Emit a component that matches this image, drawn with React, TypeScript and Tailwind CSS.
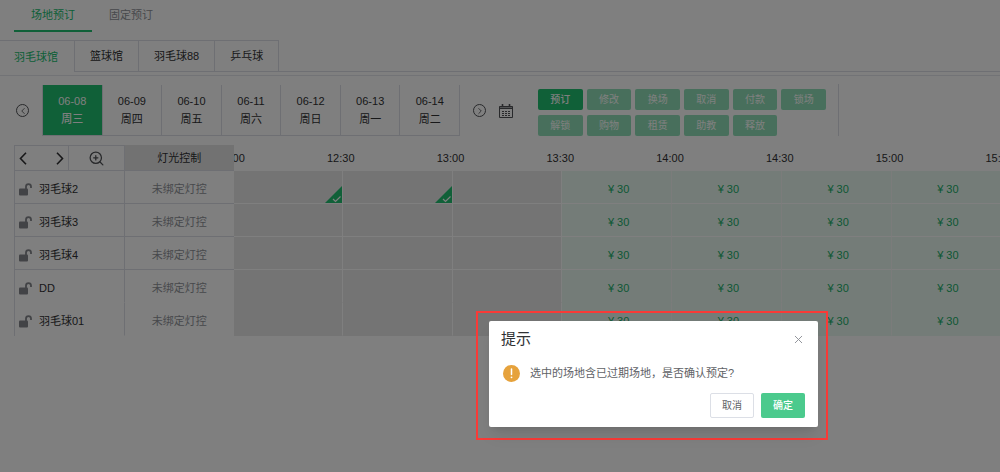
import type { ReactNode } from "react";
import { ChevronLeft, ChevronRight, ZoomIn, X } from "lucide-react";

const venues = ["羽毛球馆", "篮球馆", "羽毛球88", "乒乓球"];

const days = [
  { date: "06-08", week: "周三" },
  { date: "06-09", week: "周四" },
  { date: "06-10", week: "周五" },
  { date: "06-11", week: "周六" },
  { date: "06-12", week: "周日" },
  { date: "06-13", week: "周一" },
  { date: "06-14", week: "周二" },
];

const actions = ["预订", "修改", "换场", "取消", "付款", "锁场", "解锁", "购物", "租赁", "助教", "释放"];

const courts = ["羽毛球2", "羽毛球3", "羽毛球4", "DD", "羽毛球01"];

const slots = [
  { time: "12:00", expired: true },
  { time: "12:30", expired: true },
  { time: "13:00", expired: true },
  { time: "13:30", expired: false },
  { time: "14:00", expired: false },
  { time: "14:30", expired: false },
  { time: "15:00", expired: false },
  { time: "15:30", expired: false },
];

function CircleButton({ label, children }: { label: string; children: ReactNode }) {
  return (
    <button
      aria-label={label}
      className="flex h-[13px] w-[13px] items-center justify-center rounded-full border border-[#505256] text-[#505256]"
    >
      {children}
    </button>
  );
}

function CalendarIcon() {
  return (
    <svg viewBox="0 0 14 14" className="h-3.5 w-3.5" fill="none" stroke="#505256">
      <path d="M0.5 2.5h13v11h-13z" />
      <path d="M0.5 3h13M0.5 4.5h13" strokeWidth="1.2" />
      <path d="M3.5 0v3M10.5 0v3" strokeWidth="1.6" />
      <path d="M3 7.5h2M6 7.5h2M9 7.5h2M3 9.5h2M6 9.5h2M9 9.5h2M3 11.5h2M6 11.5h2M9 11.5h2" />
    </svg>
  );
}

function UnlockIcon() {
  return (
    <svg viewBox="0 0 13 13" className="h-[13px] w-[13px] shrink-0" fill="none">
      <rect x="0" y="5.5" width="9" height="7" rx="1" fill="#85878d" />
      <path d="M7 6V3.6a2.5 2.5 0 0 1 5 0V5" stroke="#85878d" strokeWidth="1.8" />
    </svg>
  );
}

function SelectedCorner() {
  return (
    <svg viewBox="0 0 17 17" className="absolute right-0 bottom-0 h-[17px] w-[17px]">
      <path d="M17 0v17H0z" fill="#20c070" />
      <path d="M8 13l2.5 2.5L15.5 10.5" fill="none" stroke="#fff" strokeWidth="1.2" />
    </svg>
  );
}

function MainTabs() {
  return (
    <nav className="flex h-8 px-3.5">
      <button className="w-[78px] border-b-2 border-[#20c070] text-[#20c070]">场地预订</button>
      <button className="w-[78px] border-b-2 border-transparent text-[#909399]">固定预订</button>
    </nav>
  );
}

function VenueTabs() {
  return (
    <nav className="mt-2 flex h-8">
      {venues.map((venue, i) => (
        <button
          key={venue}
          className={
            i === 0
              ? "border-t border-r border-[#dcdfe6] pr-4 pl-3.5 text-[#20c070]"
              : "border-t border-r border-b border-[#dcdfe6] px-[15px] text-[#303133]"
          }
        >
          {venue}
        </button>
      ))}
      <div className="flex-1 border-b border-[#dcdfe6]" />
    </nav>
  );
}

function DayPicker() {
  return (
    <div className="flex items-center gap-[13px]">
      <CircleButton label="上一周">
        <ChevronLeft size={10} />
      </CircleButton>
      <div className="flex h-[51px] w-[418px] border-b border-l border-[#dcdfe6]">
        {days.map((day, i) => (
          <button
            key={day.date}
            className={
              i === 0
                ? "flex-1 border-r border-[#dcdfe6] bg-[#20c070] leading-[18px] font-medium text-white"
                : "flex-1 border-r border-[#dcdfe6] leading-[18px] text-[#303133]"
            }
          >
            <span className="block">{day.date}</span>
            <span className="block">{day.week}</span>
          </button>
        ))}
      </div>
      <CircleButton label="下一周">
        <ChevronRight size={10} />
      </CircleButton>
      <button aria-label="选择日期">
        <CalendarIcon />
      </button>
    </div>
  );
}

function ActionButtons() {
  return (
    <div className="border-r border-[#dcdfe6] pr-3">
      <div className="grid w-[288px] grid-cols-6 gap-x-1 gap-y-[5px] pt-[5px]">
        {actions.map((action, i) => (
          <button
            key={action}
            className={
              i === 0
                ? "h-[21px] rounded-xs bg-[#20c070] text-[10px] font-medium text-white"
                : "h-[21px] rounded-xs bg-[#90dfb8] text-[10px] text-white"
            }
          >
            {action}
          </button>
        ))}
      </div>
    </div>
  );
}

function CourtTable() {
  return (
    <table className="w-[220px] shrink-0 table-fixed border-separate border-spacing-0 border-l border-[#dcdfe6]">
      <thead>
        <tr className="h-[26px]">
          <th className="border-t border-r border-b border-[#dcdfe6] p-0">
            <div className="flex h-6">
              <div className="flex w-1/2 items-center justify-between border-r border-[#dcdfe6] px-1">
                <button aria-label="向前">
                  <svg viewBox="0 0 8 13" className="h-[13px] w-2" fill="none" stroke="#303133" strokeWidth="1.6">
                    <path d="M7 0.8L1.5 6.5L7 12.2" />
                  </svg>
                </button>
                <button aria-label="向后">
                  <svg viewBox="0 0 8 13" className="h-[13px] w-2" fill="none" stroke="#303133" strokeWidth="1.6">
                    <path d="M1 0.8L6.5 6.5L1 12.2" />
                  </svg>
                </button>
              </div>
              <button aria-label="放大" className="flex w-1/2 items-center justify-center">
                <ZoomIn size={17} strokeWidth={1.8} className="text-[#505256]" />
              </button>
            </div>
          </th>
          <th className="border-b border-[#dcdfe6] bg-[#e4e4e4] p-0 font-normal text-[#303133]">灯光控制</th>
        </tr>
      </thead>
      <tbody>
        {courts.map((court, i) => (
          <tr key={court} className="h-[33px]">
            <td
              className={
                i < 3
                  ? "border-r border-b border-[#dcdfe6] p-0 pt-1"
                  : "border-r border-b border-r-[#dcdfe6] border-b-transparent p-0 pt-1"
              }
            >
              <div className="flex items-center gap-[7px] pl-1 text-[#303133]">
                <UnlockIcon />
                {court}
              </div>
            </td>
            <td
              className={
                i < 3
                  ? "border-b border-[#dcdfe6] p-0 pt-1 text-center text-[#909399]"
                  : "border-b border-transparent p-0 pt-1 text-center text-[#909399]"
              }
            >
              未绑定灯控
            </td>
          </tr>
        ))}
      </tbody>
    </table>
  );
}

function slotClass(expired: boolean, divided: boolean) {
  if (expired) {
    return divided
      ? "relative border-r border-b border-white bg-[#e8e8e8] p-0"
      : "relative border-r border-b border-r-white border-b-transparent bg-[#e8e8e8] p-0";
  }
  return divided
    ? "border-r border-b border-r-[#f6f8f7] border-b-white bg-[#e8f9f0] p-0 pt-1 pl-1 text-center text-[#20b06a]"
    : "border-r border-b border-r-[#f6f8f7] border-b-transparent bg-[#e8f9f0] p-0 pt-1 pl-1 text-center text-[#20b06a]";
}

function SlotTable() {
  return (
    <div className="min-w-0 flex-1 overflow-hidden">
      <table className="-ml-px w-[878px] table-fixed border-separate border-spacing-0">
        <thead>
          <tr className="h-[26px]">
            {slots.map((slot) => (
              <th key={slot.time} className="p-0 font-normal text-[#303133]">
                <div className="-ml-[18px] w-8 text-center">{slot.time}</div>
              </th>
            ))}
          </tr>
        </thead>
        <tbody>
          {courts.map((court, row) => (
            <tr key={court} className="h-[33px]">
              {slots.map((slot, col) => (
                <td key={slot.time} className={slotClass(slot.expired, row < 3)}>
                  {!slot.expired && "¥ 30"}
                  {row === 0 && col < 2 && <SelectedCorner />}
                </td>
              ))}
            </tr>
          ))}
        </tbody>
      </table>
    </div>
  );
}

function ConfirmDialog() {
  return (
    <div className="absolute top-[311px] left-[476px] border-2 border-[#f93a37] pt-2 pr-2 pb-[11px] pl-[11px]">
      <div
        role="dialog"
        aria-labelledby="confirm-title"
        className="w-[329px] rounded-xs bg-white px-3 pt-2 pb-[9px] shadow-lg"
      >
        <div className="flex items-center justify-between">
          <h2 id="confirm-title" className="text-[15px] leading-5 text-[#303133]">
            提示
          </h2>
          <button aria-label="关闭" className="pr-px text-[#909399]">
            <X size={13} strokeWidth={1.8} />
          </button>
        </div>
        <div className="mt-3 flex h-6 items-center gap-2.5 pl-0.5 text-[#606266]">
          <svg viewBox="0 0 17 17" className="h-[17px] w-[17px] shrink-0">
            <circle cx="8.5" cy="8.5" r="8.5" fill="#e6a23c" />
            <path d="M8.5 4v5.6" stroke="#fff" strokeWidth="1.5" strokeLinecap="round" />
            <circle cx="8.5" cy="12.3" r="0.9" fill="#fff" />
          </svg>
          <p>选中的场地含已过期场地，是否确认预定?</p>
        </div>
        <div className="mt-2 flex justify-end gap-[7px] pr-px text-[10px]">
          <button className="h-[25px] w-11 rounded-xs border border-[#dcdfe6] text-[#606266]">取消</button>
          <button className="h-[25px] w-11 rounded-xs bg-[#4bca8d] font-medium text-white">确定</button>
        </div>
      </div>
    </div>
  );
}

export default function App() {
  return (
    <div className="relative min-h-screen overflow-hidden bg-white font-['Liberation_Sans','Noto_Sans_CJK_SC',sans-serif] text-[11px] leading-4">
      <MainTabs />
      <VenueTabs />
      <div className="mt-[3px] border-t border-[#e4e7ed]" />
      <div className="flex items-stretch gap-[25px] pt-2 pl-4">
        <div className="pt-px">
          <DayPicker />
        </div>
        <ActionButtons />
      </div>
      <div className="mt-[9px] flex pl-3.5">
        <CourtTable />
        <SlotTable />
      </div>
      <div className="absolute inset-0 bg-black/50" />
      <ConfirmDialog />
    </div>
  );
}
